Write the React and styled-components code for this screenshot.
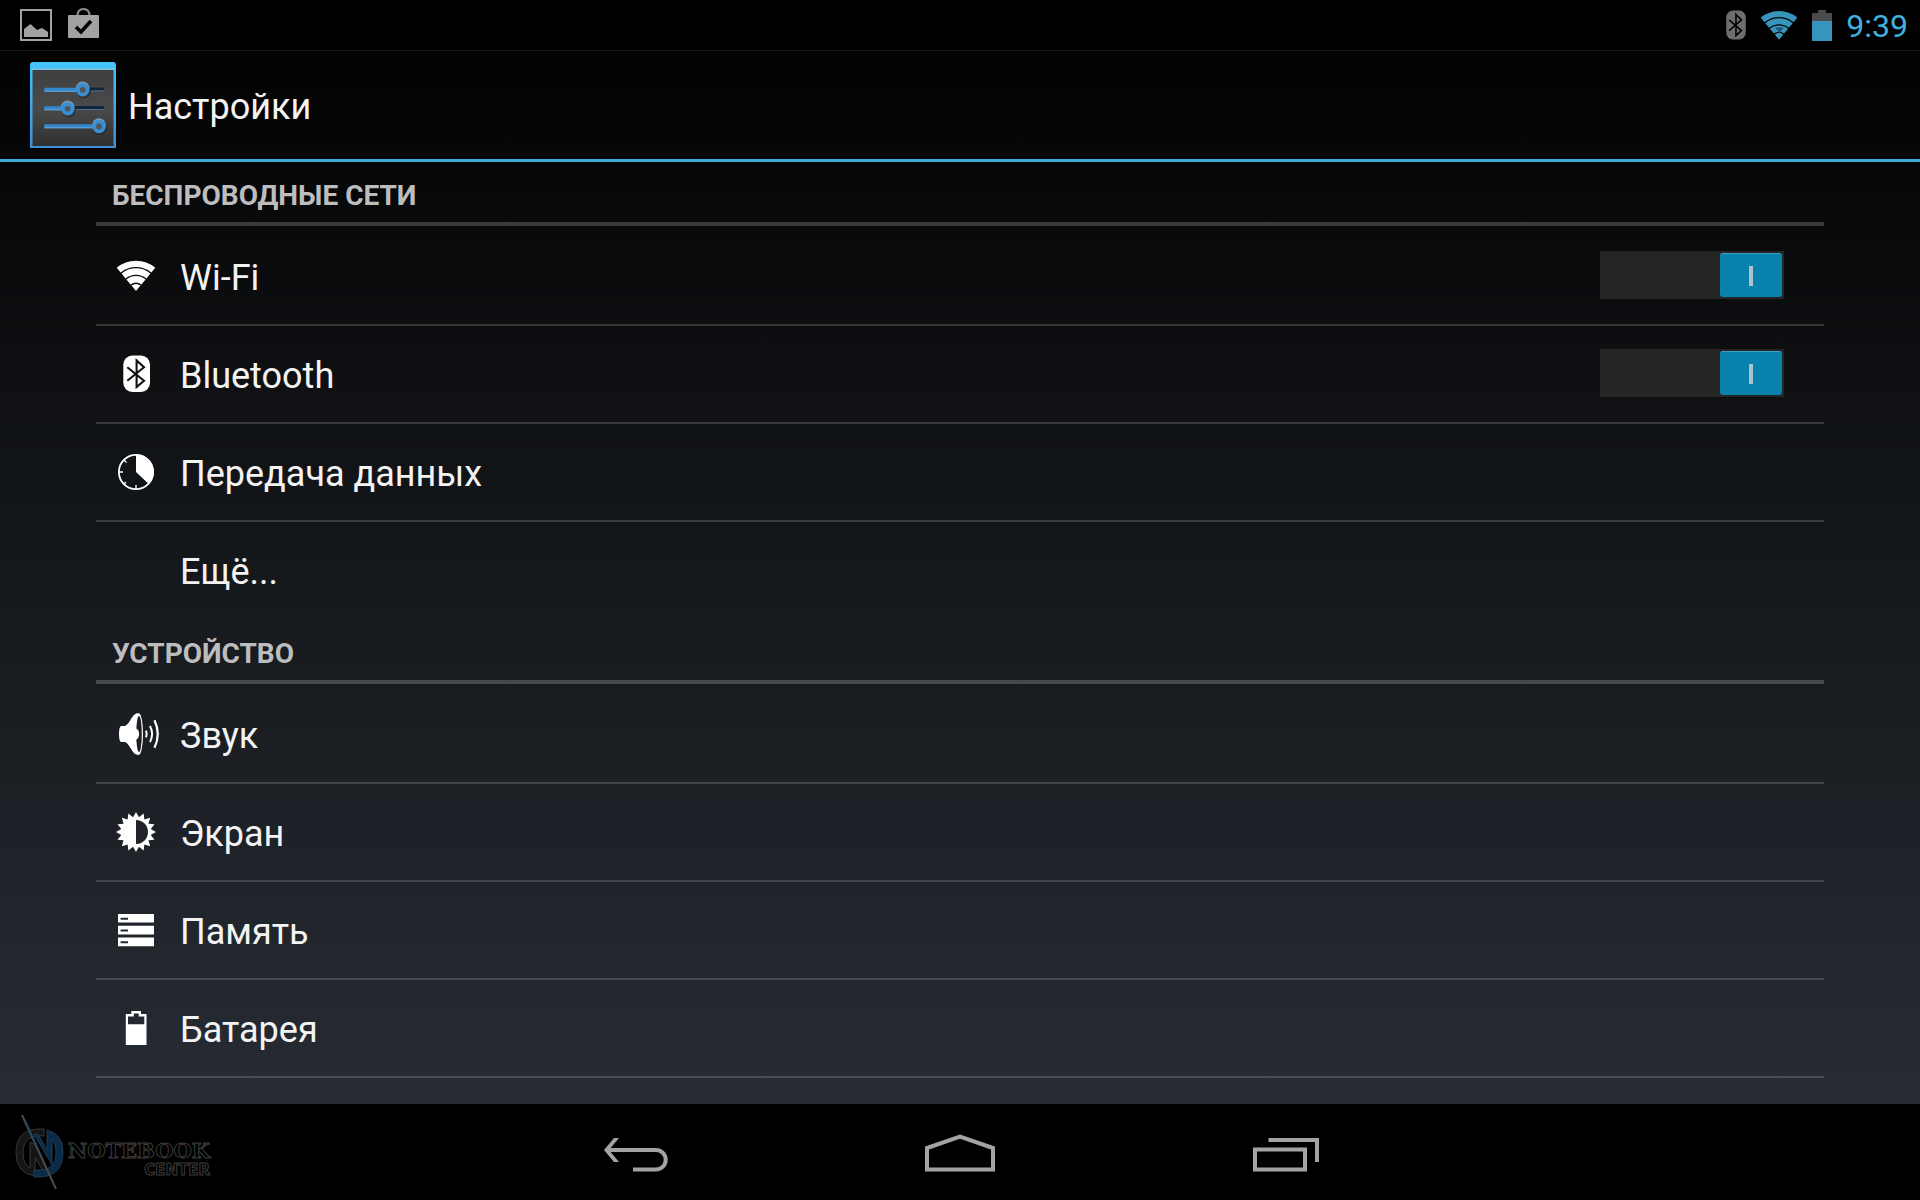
import React, { useState } from "react";
import styled, { createGlobalStyle } from "styled-components";

const GlobalStyle = createGlobalStyle`
    * {
        box-sizing: border-box;
    }

    body {
        margin: 0;
        background-color: #000;
        color: #f3f3f3;
        font-family: Roboto, "Noto Sans", sans-serif;
    }
`
const Screen = styled.div`
    display: flex;
    flex-direction: column;
    height: 100vh;
    background: linear-gradient(#000, #0a0b0d 22%, #14171a 45%, #272c34 92%);
`
const StatusBar = styled.div`
    display: flex;
    justify-content: space-between;
    align-items: center;
    height: 51px;
    flex-shrink: 0;
    padding: 0 12px 0 20px;
    background-color: #000;
    border-bottom: 1px solid #151515;
`
const StatusGroup = styled.div`
    display: flex;
    align-items: center;
    gap: ${({ $gap }) => $gap}px;

    svg {
        display: block;
    }
`
const Clock = styled.time`
    padding-top: 2px;
    color: #41b1de;
    font-size: 32px;
    line-height: 40px;
`
const Header = styled.header`
    display: flex;
    align-items: center;
    gap: 12px;
    height: 111px;
    flex-shrink: 0;
    padding-left: 30px;
    border-bottom: 3px solid #3fa9d8;
`
const Title = styled.h1`
    margin: 0;
    padding-top: 4px;
    font-size: 36px;
    font-weight: 400;
    line-height: 44px;
`
const Content = styled.main`
    flex: 1;
    min-height: 0;
    overflow: hidden;
    padding: 0 5%;
`
const SectionTitle = styled.h2`
    margin: 0 0 2px;
    padding: 18px 16px 10px;
    border-bottom: 4px solid rgba(255, 255, 255, 0.2);
    color: #bdbdbe;
    font-size: 28px;
    font-weight: 700;
    line-height: 32px;
`
const List = styled.ul`
    margin: 0;
    padding: 0;
    list-style: none;
`
const Row = styled.li`
    display: flex;
    align-items: center;
    height: 98px;
    padding-right: 40px;
    border-bottom: 2px solid ${({ $divider }) => $divider ? "rgba(255, 255, 255, 0.16)" : "transparent"};
`
const RowLink = styled.a`
    display: flex;
    flex: 1;
    align-items: center;
    gap: 20px;
    height: 100%;
    padding-left: 16px;
    color: inherit;
    text-decoration: none;
`
const RowLabel = styled.span`
    padding-top: 4px;
    font-size: 36px;
    line-height: 44px;
`
const IconBox = styled.span`
    width: 48px;
    height: 48px;
    color: #fff;

    svg {
        display: block;
    }
`
const Switch = styled.input`
    display: flex;
    appearance: none;
    width: 184px;
    height: 48px;
    margin: 0 0 2px;
    padding: 2px;
    background-color: #252526;
    cursor: pointer;

    &::before {
        content: "";
        width: 62px;
        height: 43px;
        border-top: 1px solid #555;
        border-radius: 3px;
        background: linear-gradient(#888, #888) center / 4px 20px no-repeat #444;
    }

    &:checked {
        justify-content: flex-end;
    }

    &:checked::before {
        border-top-color: #3ba3c6;
        background: linear-gradient(#a9c3ce, #a9c3ce) center / 4px 20px no-repeat #0881ad;
    }
`
const NavBar = styled.nav`
    display: grid;
    grid-template-columns: 1fr auto 1fr;
    align-items: center;
    height: 96px;
    flex-shrink: 0;
    background-color: #000;
`
const NavButtons = styled.div`
    display: flex;
`
const NavButton = styled.button`
    display: flex;
    justify-content: center;
    align-items: center;
    width: 324px;
    height: 96px;
    padding: 0;
    border: none;
    background: none;
    color: #a3a3a3;
    cursor: pointer;
`
const Brand = styled.div`
    display: flex;
    align-items: center;
    padding-left: 12px;
`
const BrandText = styled.div`
    display: flex;
    flex-direction: column;
    align-items: flex-end;
    padding-top: 16px;
    color: #000;
    -webkit-text-stroke: 1px #3c3c3c;
`
const BrandName = styled.span`
    font-family: "DejaVu Serif", serif;
    font-size: 21px;
    font-weight: 700;
    line-height: 20px;
`
const BrandSub = styled.span`
    font-family: "DejaVu Sans", sans-serif;
    font-size: 15px;
    font-weight: 700;
    line-height: 18px;
`

const WifiShape = () => (
    <g fill="none" stroke="currentColor">
        <path d="M6.7 18.1A27.1 27.1 0 0 1 41.3 18.1" strokeWidth="6.2" />
        <path d="M11.6 24A19.4 19.4 0 0 1 36.4 24" strokeWidth="6.4" />
        <path d="M16.5 30A11.7 11.7 0 0 1 31.5 30" strokeWidth="6.6" />
        <path d="M24 39L19.5 33.6A7 7 0 0 1 28.5 33.6Z" fill="currentColor" stroke="none" />
    </g>
)

const BluetoothShape = ({ rune }) => (
    <>
        <rect x="11.3" y="5.5" width="26.7" height="36.5" rx="9" fill="currentColor" />
        <path d="M15.3 17.3L32 30.7L24.6 37V10.5L32 17.3L15.3 30.7" fill="none" stroke={rune} strokeWidth="2.1" />
    </>
)

const sunPoints = Array.from({ length: 32 }, (_, i) => {
    const r = i % 2 ? 15 : 20
    const a = (i * Math.PI) / 16
    return `${24 + r * Math.sin(a)},${24 - r * Math.cos(a)}`
}).join(" ")

const icons = {
    wifi: <WifiShape />,
    bluetooth: <BluetoothShape rune="#111216" />,
    data: (
        <>
            <circle cx="24" cy="24" r="17.1" fill="none" stroke="currentColor" strokeWidth="1.8" />
            <path d="M24 6.5A17.5 17.5 0 0 1 37 36.2L24 24Z" fill="currentColor" />
            <path d="M7 24H11M24 41V37M12 12L14.5 14.5M12 36L14 34" stroke="currentColor" strokeWidth="1.3" />
        </>
    ),
    sound: (
        <>
            <path d="M9 16H13C18 14 20 4 25 3.3H27V44.7H25C20 44 18 34 13 32H9Q7 31 7 24Q7 17 9 16Z" fill="currentColor" />
            <ellipse cx="26.8" cy="24" rx="4.2" ry="20.7" fill="currentColor" />
            <ellipse cx="27" cy="24" rx="2.8" ry="18" fill="#1c1f23" />
            <ellipse cx="23.5" cy="24" rx="3.6" ry="5.5" fill="currentColor" />
            <path d="M34 20.7Q35.4 24 34 27.3" fill="none" stroke="currentColor" strokeWidth="2" />
            <path d="M38 16Q42.2 24 38 32" fill="none" stroke="currentColor" strokeWidth="2" />
            <path d="M42.5 10.3Q49 24 42.5 37.7" fill="none" stroke="currentColor" strokeWidth="2.2" />
        </>
    ),
    display: (
        <>
            <polygon points={sunPoints} fill="currentColor" />
            <path d="M24 12A12 12 0 0 1 24 36Z" fill="#1f2327" />
        </>
    ),
    storage: (
        <>
            <path d="M6 8H42V16.6H6ZM6 19.8H42V28.4H6ZM6 31.6H42V40.2H6Z" fill="currentColor" />
            <path d="M8.6 12.7H16M8.6 24.5H16M8.6 36.2H16" stroke="#24292e" strokeWidth="2" />
        </>
    ),
    battery: (
        <path
            d="M13.8 10H19.3V7H29V10H34.5V41H13.8ZM16 12.4V20.3H32.3V12.4H26.7V9.5H21.8V12.4Z"
            fill="currentColor"
            fillRule="evenodd"
        />
    ),
}

const SettingsLogo = () => (
    <svg width="86" height="86" viewBox="0 0 86 86" aria-hidden="true">
        <defs>
            <linearGradient id="frame" x1="0" y1="0" x2="0" y2="1">
                <stop offset="0" stopColor="#43c5fb" />
                <stop offset="1" stopColor="#3d8ed6" />
            </linearGradient>
            <linearGradient id="plate" x1="0" y1="0" x2="0" y2="1">
                <stop offset="0" stopColor="#3f3f3f" />
                <stop offset="0.5" stopColor="#4a4a4a" />
                <stop offset="1" stopColor="#303030" />
            </linearGradient>
        </defs>
        <path d="M3 0H83Q86 0 86 3V86H0V3Q0 0 3 0Z" fill="url(#frame)" />
        <path d="M2.5 7.5H83.5V84H2.5Z" fill="url(#plate)" />
        <path d="M2 7.3H84" stroke="#86bfdc" strokeWidth="1.4" />
        <path d="M56 27H73.7M42 45.6H73.7" stroke="#12243a" strokeWidth="3" />
        <path d="M56 29H73.7M42 47.5H73.7" stroke="#4a6e90" strokeWidth="1" />
        <path d="M14.3 27.7H50M14.3 46.3H35M14.3 64.3H66" stroke="#3587cb" strokeWidth="4" />
        <path d="M14.3 29.3H47M14.3 47.8H32M14.3 65.8H63" stroke="#67a9dc" strokeWidth="1" />
        {[[52.7, 27.3], [37.7, 46.3], [69, 64]].map(([x, y]) => (
            <g key={x}>
                <circle cx={x + 1} cy={y + 2} r="7.3" fill="#262626" opacity="0.6" />
                <circle cx={x} cy={y - 1} r="6.8" fill="#7f99ae" />
                <circle cx={x} cy={y + 0.5} r="4.8" fill="#555" stroke="#388fd4" strokeWidth="3.8" />
            </g>
        ))}
    </svg>
)

const BrandMark = () => (
    <svg width="56" height="80" viewBox="0 0 56 80" aria-hidden="true">
        <path
            d="M32 17V24Q11 22 11 41Q11 52 18 56V30L24 33L37 61L33 62L23 46V64Q4 61 4 41Q4 18 26 17Z"
            fill="#151515"
            stroke="#383838"
        />
        <path
            d="M35 18Q51 22 51 40Q51 64 28 65H22V58H28Q44 58 44 41Q44 32 40 28V53L22 22L26 22L35 38Z"
            fill="#0c2b47"
            stroke="#1c3c56"
        />
        <path d="M10 3L44 77" stroke="#474b4e" strokeWidth="2" />
        <path d="M13 9L24 33" stroke="#234966" strokeWidth="2" />
    </svg>
)

const sections = [
    {
        title: "БЕСПРОВОДНЫЕ СЕТИ",
        rows: [
            { id: "wifi", label: "Wi-Fi", toggle: true },
            { id: "bluetooth", label: "Bluetooth", toggle: true },
            { id: "data", label: "Передача данных" },
            { id: "more", label: "Ещё...", last: true },
        ],
    },
    {
        title: "УСТРОЙСТВО",
        rows: [
            { id: "sound", label: "Звук" },
            { id: "display", label: "Экран" },
            { id: "storage", label: "Память" },
            { id: "battery", label: "Батарея" },
        ],
    },
]

function SettingRow({ id, label, toggle, last }) {
    const [on, setOn] = useState(true)

    return (
        <Row $divider={!last}>
            <RowLink href={`#${id}`}>
                <IconBox>
                    {icons[id] && (
                        <svg width="48" height="48" viewBox="0 0 48 48" aria-hidden="true">{icons[id]}</svg>
                    )}
                </IconBox>
                <RowLabel id={`${id}-label`}>{label}</RowLabel>
            </RowLink>
            {toggle && (
                <Switch
                    type="checkbox"
                    role="switch"
                    aria-labelledby={`${id}-label`}
                    checked={on}
                    onChange={() => setOn(!on)}
                />
            )}
        </Row>
    )
}

export default function App() {
    return (
        <Screen>
            <GlobalStyle />
            <StatusBar>
                <StatusGroup $gap={16}>
                    <svg width="32" height="32" viewBox="0 0 32 32" aria-hidden="true">
                        <rect x="1" y="1" width="30" height="30" fill="none" stroke="#a2a2a2" strokeWidth="2" />
                        <path d="M4 28V20L10.5 15L17 21L22 19L28 23V28Z" fill="#a2a2a2" />
                    </svg>
                    <svg width="31" height="34" viewBox="0 0 31 34" aria-hidden="true">
                        <path d="M9.5 8Q9.5 1 15.5 1Q21.5 1 21.5 8" fill="none" stroke="#8c8c8c" strokeWidth="2" />
                        <rect y="7" width="31" height="23" rx="1" fill="#a2a2a2" />
                        <path d="M8 19L13 24L23 13" fill="none" stroke="#000" strokeWidth="3.6" />
                    </svg>
                </StatusGroup>
                <StatusGroup $gap={14}>
                    <svg width="20" height="30" viewBox="11 5 27.3 37.5" preserveAspectRatio="none" color="#6e6e6e" aria-hidden="true">
                        <BluetoothShape rune="#000" />
                    </svg>
                    <svg width="38" height="30" viewBox="4 8 40 31" color="#3795bd" aria-hidden="true">
                        <WifiShape />
                        <path d="M20 26H29L24.5 32Z" fill="#1d5670" />
                    </svg>
                    <svg width="20" height="31" viewBox="0 0 20 31" aria-hidden="true">
                        <path d="M0 3H6V0H14V3H20V12H0Z" fill="#4b4b4b" />
                        <path d="M0 11H20V31H0Z" fill="#3795bd" />
                    </svg>
                    <Clock>9:39</Clock>
                </StatusGroup>
            </StatusBar>
            <Header>
                <SettingsLogo />
                <Title>Настройки</Title>
            </Header>
            <Content>
                {sections.map(({ title, rows }) => (
                    <section key={title}>
                        <SectionTitle>{title}</SectionTitle>
                        <List>
                            {rows.map((row) => <SettingRow key={row.id} {...row} />)}
                        </List>
                    </section>
                ))}
            </Content>
            <NavBar>
                <Brand>
                    <BrandMark />
                    <BrandText>
                        <BrandName>NOTEBOOK</BrandName>
                        <BrandSub>CENTER</BrandSub>
                    </BrandText>
                </Brand>
                <NavButtons>
                    <NavButton aria-label="Назад">
                        <svg width="64" height="40" viewBox="0 0 64 40" aria-hidden="true">
                            <path d="M3 18H52A9.7 9.7 0 0 1 52 37.5H29" fill="none" stroke="currentColor" strokeWidth="4" />
                            <path d="M10 6H15L5 18L15 30H10L0 18Z" fill="currentColor" />
                        </svg>
                    </NavButton>
                    <NavButton aria-label="Домой">
                        <svg width="70" height="40" viewBox="0 0 70 40" aria-hidden="true">
                            <path d="M2 37.5V16L35 4.5L68 16V37.5Z" fill="none" stroke="currentColor" strokeWidth="4" />
                        </svg>
                    </NavButton>
                    <NavButton aria-label="Недавние">
                        <svg width="70" height="40" viewBox="0 0 70 40" aria-hidden="true">
                            <path d="M6 17.5H56V37.5H6ZM19.5 8H68V30" fill="none" stroke="currentColor" strokeWidth="4" />
                        </svg>
                    </NavButton>
                </NavButtons>
            </NavBar>
        </Screen>
    )
}
